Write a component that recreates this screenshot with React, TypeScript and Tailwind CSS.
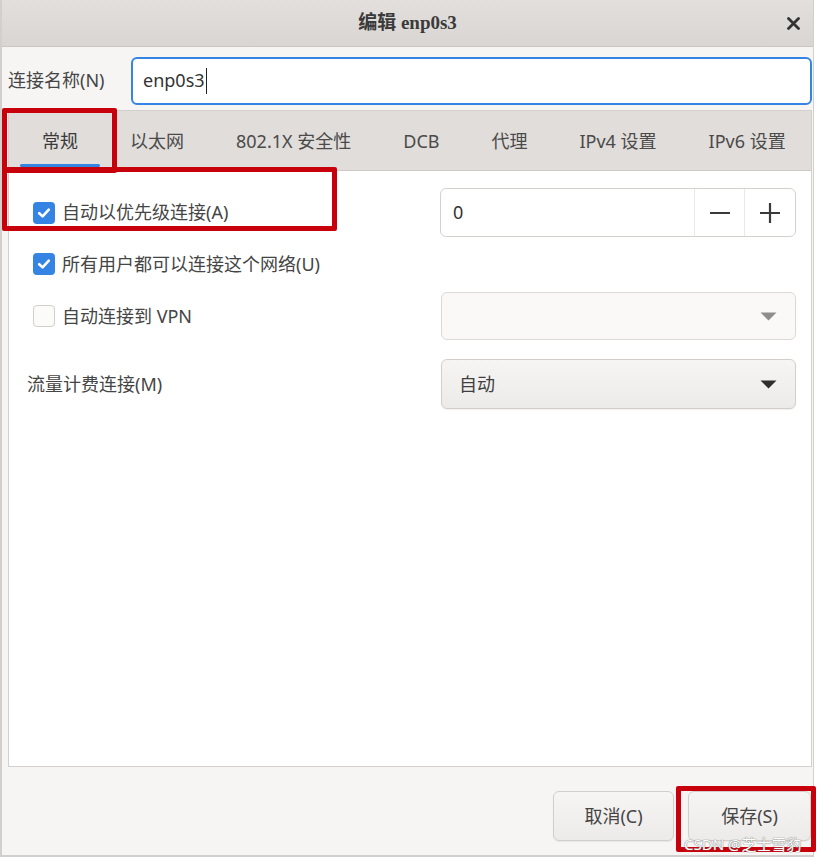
import * as React from "react";

const tabs = ["常规", "以太网", "802.1X 安全性", "DCB", "代理", "IPv4 设置", "IPv6 设置"];

function CheckBox({ checked }: { checked: boolean }) {
  if (checked) {
    return (
      <span className="flex h-[22px] w-[22px] shrink-0 items-center justify-center rounded-[4px] bg-[#3584e4]">
        <svg width="14" height="14" viewBox="0 0 14 14" fill="none">
          <path d="M2.2 7.2 L5.6 10.4 L11.8 3.6" stroke="#fff" strokeWidth="2.6" strokeLinecap="round" strokeLinejoin="round" />
        </svg>
      </span>
    );
  }
  return <span className="h-[22px] w-[22px] shrink-0 rounded-[4px] border border-[#d3cec9] bg-[#fbfbfa]" />;
}

function Arrow({ color }: { color: string }) {
  return (
    <svg width="17" height="9" viewBox="0 0 17 9">
      <path d="M0.5 0.5 L16.5 0.5 L8.5 8.5 Z" fill={color} />
    </svg>
  );
}

export default function App() {
  return (
    <div
      className="relative h-[862px] w-[817px] bg-white text-[18px] text-[#454545]"
      style={{ fontFamily: '"Noto Sans", "Noto Sans CJK SC", sans-serif' }}
    >
      <div className="flex h-[857px] w-[814px] flex-col border-b-[2px] border-l-[2px] border-r border-[#d3cfcc] bg-[#f6f5f4]">
        {/* Title bar */}
        <div className="flex h-[47px] shrink-0 items-center border-b border-[#cbc6c2] bg-gradient-to-b from-[#e2dfdc] to-[#d9d5d2]">
          <div className="flex-1 pl-[36px] text-center">
            <span
              className="text-[19px] font-bold text-[#3a3a3a]"
              style={{ fontFamily: '"Liberation Serif", "Noto Sans CJK SC", serif' }}
            >
              编辑 enp0s3
            </span>
          </div>
          <div className="flex w-[36px] items-center justify-start pl-[10px]">
            <svg width="13" height="13" viewBox="0 0 13 13">
              <path d="M1.5 1.5 L11.5 11.5 M11.5 1.5 L1.5 11.5" stroke="#333" strokeWidth="2.8" strokeLinecap="round" />
            </svg>
          </div>
        </div>

        {/* Connection name */}
        <div className="flex h-[63px] shrink-0 items-center pl-[6px] pr-[1px] pt-[4px]">
          <span className="w-[123px] shrink-0">连接名称(N)</span>
          <div className="flex h-[48px] flex-1 items-center rounded-[6px] border-2 border-[#3584e4] bg-white pl-[10px] text-[#333]">
            enp0s3
            <span className="ml-[1px] h-[26px] w-[1.5px] bg-[#222]" />
          </div>
        </div>

        {/* Notebook */}
        <div className="ml-[6px] mr-[1px] flex flex-1 flex-col border border-[#d3cfcc]">
          <div className="flex h-[60px] shrink-0 items-stretch border-b border-[#cfcac6] bg-[#e1ddda] pl-[7px]">
            {tabs.map((t, i) => (
              <div key={t} className="relative flex items-center whitespace-nowrap px-[26px] pt-[2px]">
                <span className={i === 0 ? "text-[#3a3a3a]" : "text-[#4a4a4a]"}>{t}</span>
                {i === 0 && <span className="absolute bottom-[3px] left-[4px] right-[4px] h-[3px] rounded-full bg-[#3584e4]" />}
              </div>
            ))}
          </div>

          <div className="flex flex-1 flex-col bg-white pl-[18px] pr-[15px] pt-[17px]">
            <div className="flex h-[49px] items-center">
              <div className="flex flex-1 items-center gap-[7px] pl-[6px]">
                <CheckBox checked />
                <span>自动以优先级连接(A)</span>
              </div>
              <div className="flex h-[49px] w-[356px] items-stretch overflow-hidden rounded-[6px] border border-[#d6d1cc] bg-white">
                <div className="flex flex-1 items-center pl-[12px] text-[#333]">0</div>
                <div className="flex w-[50px] items-center justify-center border-l border-[#ebe8e5]">
                  <svg width="22" height="22" viewBox="0 0 22 22">
                    <path d="M1 11 H21" stroke="#3a3a3a" strokeWidth="2.2" />
                  </svg>
                </div>
                <div className="flex w-[51px] items-center justify-center border-l border-[#ebe8e5]">
                  <svg width="22" height="22" viewBox="0 0 22 22">
                    <path d="M1 11 H21 M11 1 V21" stroke="#3a3a3a" strokeWidth="2.2" />
                  </svg>
                </div>
              </div>
            </div>

            <div className="mt-[16px] flex h-[22px] items-center gap-[7px] pl-[6px]">
              <CheckBox checked />
              <span>所有用户都可以连接这个网络(U)</span>
            </div>

            <div className="mt-[17px] flex h-[48px] items-center">
              <div className="flex flex-1 items-center gap-[7px] pl-[6px]">
                <CheckBox checked={false} />
                <span>自动连接到 VPN</span>
              </div>
              <div className="flex h-[48px] w-[355px] items-center justify-end rounded-[6px] border border-[#dcd8d4] bg-[#faf9f8] pr-[18px]">
                <Arrow color="#8e8e8e" />
              </div>
            </div>

            <div className="mt-[19px] flex h-[50px] items-center">
              <span className="flex-1">流量计费连接(M)</span>
              <div className="flex h-[50px] w-[355px] items-center justify-between rounded-[6px] border border-[#d3cec9] bg-gradient-to-b from-[#f6f5f4] to-[#edebe9] pl-[17px] pr-[18px] shadow-[0_1px_1px_rgba(0,0,0,0.06)]">
                <span className="text-[#3f3f3f]">自动</span>
                <Arrow color="#2e2e2e" />
              </div>
            </div>
          </div>
        </div>

        {/* Action area */}
        <div className="flex h-[88px] shrink-0 items-center justify-end gap-[14px] pr-[2px] pt-[10px]">
          <button className="h-[50px] w-[121px] rounded-[6px] border border-[#d3cec9] bg-gradient-to-b from-[#f6f5f4] to-[#edebe9] text-[18px] text-[#454545] shadow-[0_1px_1px_rgba(0,0,0,0.06)]">
            取消(C)
          </button>
          <button className="h-[50px] w-[123px] rounded-[6px] border border-[#d3cec9] bg-gradient-to-b from-[#f6f5f4] to-[#edebe9] text-[18px] text-[#454545] shadow-[0_1px_1px_rgba(0,0,0,0.06)]">
            保存(S)
          </button>
        </div>
      </div>

      {/* Red annotation boxes */}
      <div className="absolute left-[2px] top-[108px] h-[65px] w-[115px] rounded-[2px] border-[5px] border-[#c8000c]" />
      <div className="absolute left-[2px] top-[167px] h-[64px] w-[335px] rounded-[2px] border-[5px] border-[#c8000c]" />
      <div className="absolute left-[676px] top-[786px] h-[66px] w-[140px] rounded-[2px] border-[5px] border-[#c8000c]" />

      {/* Watermark */}
      <div
        className="absolute left-[684px] top-[837px] text-[15px] leading-none text-white"
        style={{ textShadow: "0 0 1px #777, 0 0 1px #777" }}
      >
        CSDN @芝士雪豹
      </div>
    </div>
  );
}
